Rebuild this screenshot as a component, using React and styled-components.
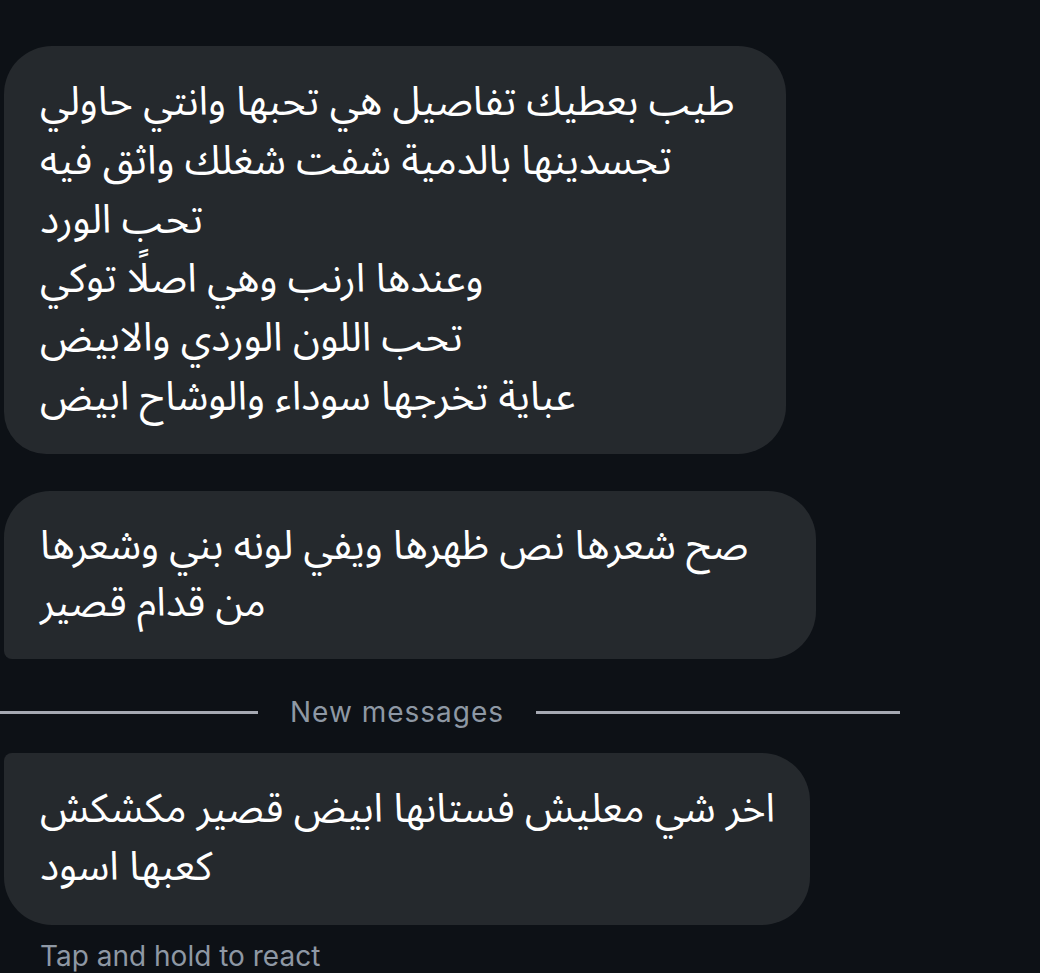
import React from "react";
import styled, { createGlobalStyle } from "styled-components";

const GlobalStyle = createGlobalStyle`
  html, body {
    margin: 0;
    padding: 0;
    background-color: #0d1116;
  }
  body {
    height: 973px;
    overflow: hidden;
  }
`;

const Page = styled.div`
  display: flex;
  flex-direction: column;
  align-items: flex-start;
  padding: 46px 0 0 4px;
  background-color: #0d1116;
  min-height: 973px;
  box-sizing: border-box;
`;

const Bubble = styled.div`
  box-sizing: border-box;
  width: ${(p) => p.width}px;
  padding: ${(p) => p.pad}px 0 ${(p) => p.pad}px 36px;
  margin-bottom: ${(p) => p.gap || 0}px;
  background-color: #25292d;
  color: #ffffff;
  font-family: "Noto Sans Arabic", "DejaVu Sans", sans-serif;
  font-size: 40px;
  line-height: ${(p) => p.lh}px;
  border-radius: ${(p) => p.radius};
`;

const Line = styled.div`
  height: ${(p) => p.lh}px;
  white-space: nowrap;
  text-align: left;
`;

const Divider = styled.div`
  display: flex;
  align-items: center;
  width: 900px;
  margin: 0 0 22px -4px;
  height: 38px;
`;

const Rule = styled.div`
  height: 3px;
  background-color: #a5a9b2;
  width: ${(p) => p.width}px;
  flex: ${(p) => (p.grow ? "1" : "none")};
`;

const DividerText = styled.span`
  padding: 0 32px;
  font-family: Inter, "Liberation Sans", sans-serif;
  font-size: 28px;
  letter-spacing: 1px;
  color: #8e98a4;
`;

const Hint = styled.div`
  margin: 14px 0 0 36px;
  font-family: Inter, "Liberation Sans", sans-serif;
  font-size: 28px;
  line-height: 34px;
  color: #8e98a4;
`;

const messages = [
  {
    width: 782,
    pad: 27,
    lh: 59,
    gap: 37,
    radius: "48px 48px 48px 42px",
    lines: [
      "طيب بعطيك تفاصيل هي تحبها وانتي حاولي",
      "تجسدينها بالدمية شفت شغلك واثق فيه",
      "تحب الورد",
      "وعندها ارنب وهي اصلًا توكي",
      "تحب اللون الوردي والابيض",
      "عباية تخرجها سوداء والوشاح ابيض",
    ],
  },
  {
    width: 812,
    pad: 27,
    lh: 57,
    gap: 34,
    radius: "46px 48px 48px 8px",
    lines: ["صح شعرها نص ظهرها ويفي لونه بني وشعرها", "من قدام قصير"],
  },
];

const last = {
  width: 806,
  pad: 28,
  lh: 58,
  radius: "8px 48px 48px 48px",
  lines: ["اخر شي معليش فستانها ابيض قصير مكشكش", "كعبها اسود"],
};

const Message = ({ msg }) => (
  <Bubble width={msg.width} pad={msg.pad} lh={msg.lh} gap={msg.gap} radius={msg.radius}>
    {msg.lines.map((l, i) => (
      <Line key={i} lh={msg.lh}>{l}</Line>
    ))}
  </Bubble>
);

export default function App() {
  return (
    <>
      <GlobalStyle />
      <Page>
        {messages.map((m, i) => (
          <Message key={i} msg={m} />
        ))}
        <Divider>
          <Rule width={258} />
          <DividerText>New messages</DividerText>
          <Rule grow />
        </Divider>
        <Message msg={last} />
        <Hint>Tap and hold to react</Hint>
      </Page>
    </>
  );
}
